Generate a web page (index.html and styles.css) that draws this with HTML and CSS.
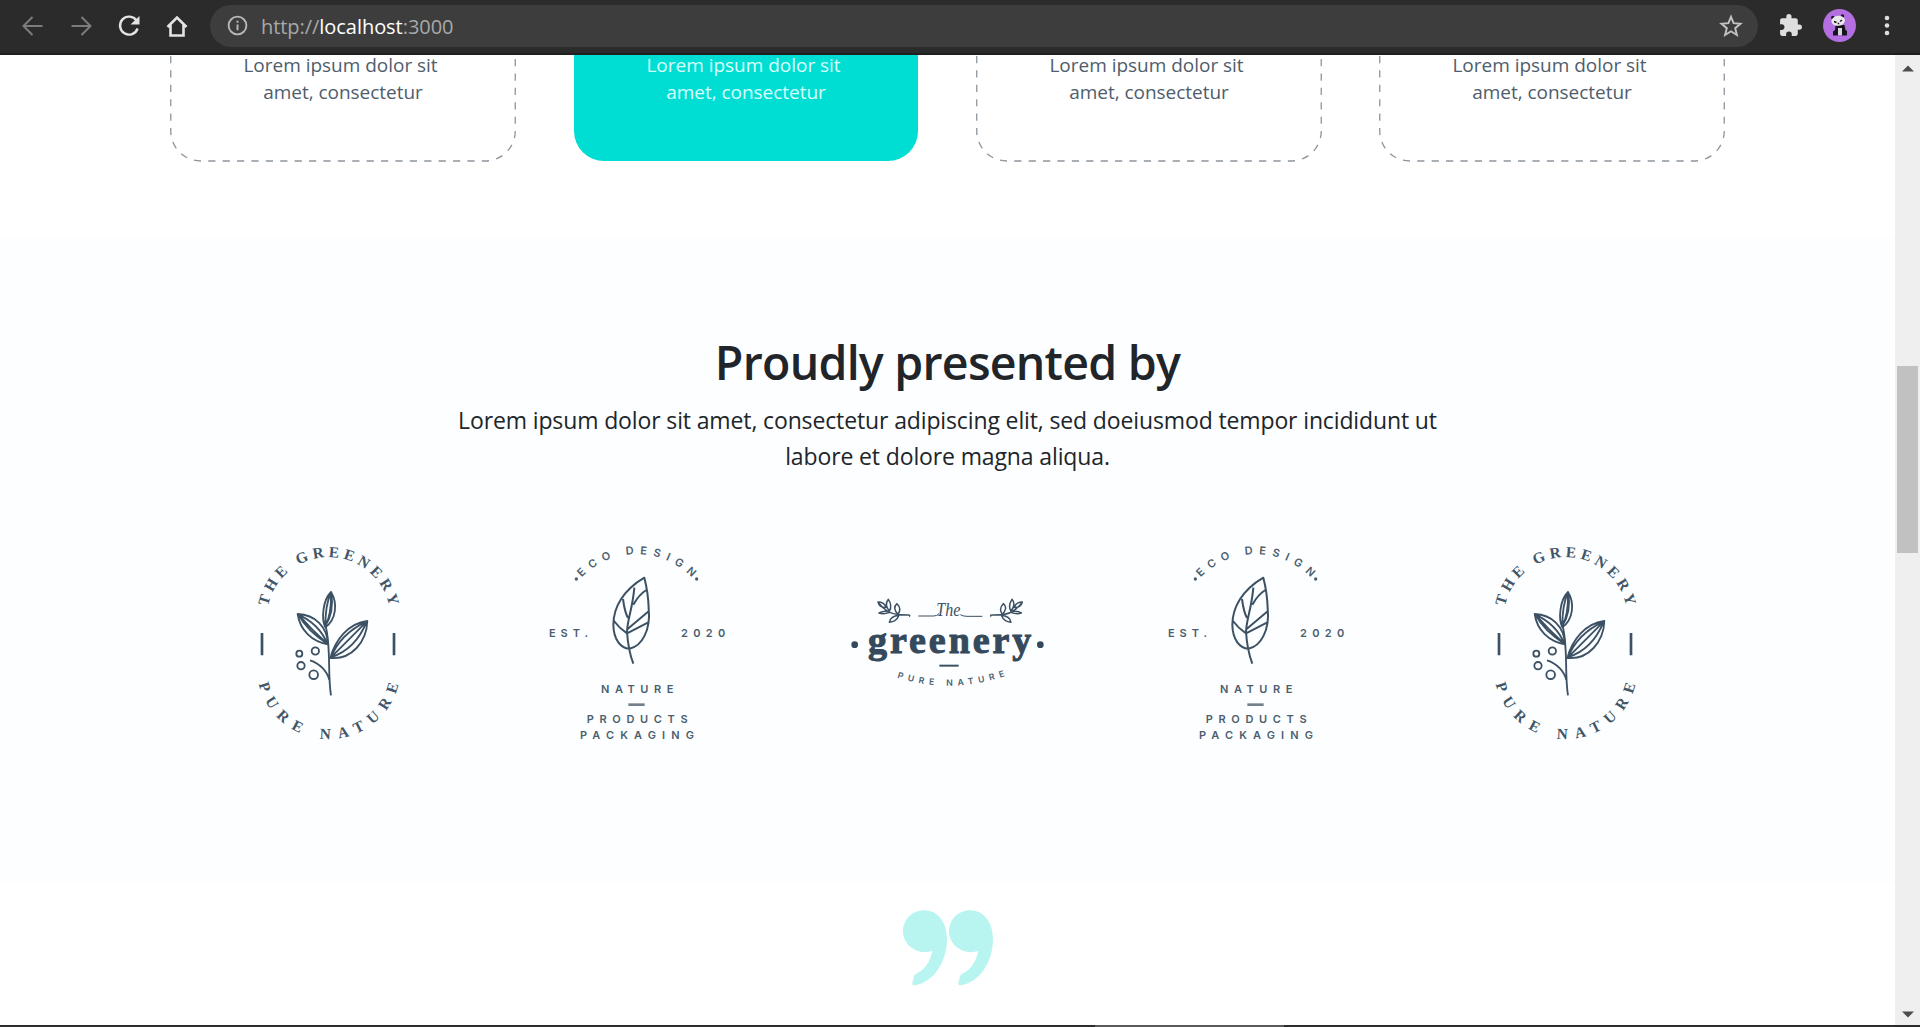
FILE: index.html
```html
<!DOCTYPE html>
<html lang="en">
<head>
<meta charset="utf-8">
<title>localhost:3000</title>
<link rel="stylesheet" href="styles.css">
</head>
<body>
<svg class="defs" width="0" height="0" aria-hidden="true">
  <defs>
    <symbol id="botanic" viewBox="-24 48 582 582">
      <path id="arc-top" d="M84 229A186 186 0 0 1 448 229" fill="none"/>
      <path id="arc-bottom" d="M56 462A216 216 0 0 0 476 462" fill="none"/>
      <g class="mark-serif">
        <text><textPath href="#arc-top" textLength="506">THE GREENERY</textPath></text>
        <text><textPath href="#arc-bottom" textLength="575">PURE NATURE</textPath></text>
      </g>
      <path class="ink" stroke-width="8" d="M66 309V376M462 309V376"/>
      <g class="ink" stroke-width="5.500">
        <path d="M273 496C262 430 274 350 256 284M268 450C262 425 240 400 210 391"/>
        <path d="M256 292C243 265 249 210 273 186C294 220 288 270 256 292ZM256 288C256 250 260 215 273 188C274 225 270 262 256 288M256 288Q283 245 274 190" />
        <path d="M264 343C215 335 180 300 173 252C225 254 262 290 264 343ZM262 341C225 318 195 290 175 254C215 272 245 300 262 341M262 341Q215 300 175 254"/>
        <path d="M271 384C285 330 325 280 382 273C380 335 335 390 271 384ZM273 382C290 340 325 300 380 275C360 325 325 365 273 382M273 382Q325 330 380 275"/>
        <circle cx="178" cy="371" r="9"/><circle cx="226" cy="363" r="11"/><circle cx="183" cy="407" r="11"/><circle cx="221" cy="434" r="13"/>
      </g>
    </symbol>
    <symbol id="leaf" viewBox="35 48 582 582">
      <path id="arc-eco" d="M157 142A231 231 0 0 1 489 144" fill="none"/>
      <g class="mark-sans">
        <text><textPath href="#arc-eco" textLength="368">ECO DESIGN</textPath></text>
        <text x="59" y="321" textLength="117">EST.</text>
        <text x="455" y="321" textLength="133">2020</text>
        <text x="215" y="488" textLength="217">NATURE</text>
        <text x="172" y="580" textLength="303">PRODUCTS</text>
        <text x="152" y="627" textLength="342">PACKAGING</text>
        <circle cx="141" cy="147" r="5"/><circle cx="502" cy="147" r="5"/>
      </g>
      <path class="ink soft" stroke-width="8" d="M297 524H346"/>
      <path class="ink" stroke-width="6" d="M345 143C282 180 252 232 252 285C253 330 275 355 300 356C337 350 365 300 358 235C357 200 352 170 345 143ZM312 401C302 375 296 350 293 306C294 268 310 235 315 173M281 207C284 230 288 250 296 264M351 180C335 190 322 206 312 224M254 273Q270 295 293 310L357 277M294 298L358 244"/>
    </symbol>
    <symbol id="greenery" viewBox="34 -102 582 582">
      <path id="arc-pure" d="M172 293Q335 345 505 285" fill="none"/>
      <text class="mark-script" x="290" y="109" textLength="72" lengthAdjust="spacingAndGlyphs">The</text>
      <text class="mark-display" x="85" y="218" textLength="490">greenery</text>
      <text class="mark-small"><textPath href="#arc-pure" textLength="330">PURE NATURE</textPath></text>
      <circle cx="45" cy="194" r="10" fill="#34495b"/><circle cx="602" cy="194" r="10" fill="#34495b"/>
      <path class="ink" stroke-width="6" d="M299 257H357"/>
      <path class="ink" stroke-width="3" d="M236 108H282Q292 108 298 101M362 104Q370 109 382 109H428"/>
      <g id="sprig" class="ink" stroke-width="4.500">
        <path d="M114 65Q142 104 180 104T208 109M115 66Q120 84 139 82Q134 66 115 66ZM146 58Q133 74 149 93Q159 77 146 58ZM172 71Q157 84 175 103Q187 86 172 71ZM118 99Q132 104 150 97Q136 90 118 99ZM149 127Q153 108 178 106Q170 126 149 127Z"/>
      </g>
      <use href="#sprig" transform="matrix(-1 0 0 1 663 0)"/>
    </symbol>
  </defs>
</svg>
<div class="browser">
  <header class="toolbar">
    <svg class="nav dim" viewBox="0 0 24 24"><path d="M21.500 12H3M11.500 3L2.500 12L11.500 21"/></svg>
    <svg class="nav dim" viewBox="0 0 24 24"><path d="M2.500 12H21M12.500 3L21.500 12L12.500 21"/></svg>
    <svg class="nav" viewBox="0 0 24 24"><path stroke-width="2.400" d="M19.500 6.500A9 9 0 1 0 20.600 14.500"/><path class="fill" d="M22.500 2V10.500H13.500Z"/></svg>
    <svg class="nav" viewBox="0 0 24 24"><path stroke-width="2.600" d="M2.500 13L12 3.500L21.500 13M5.500 11V21.500H18.500V11"/></svg>
    <div class="address">
      <svg class="info" viewBox="0 0 22 22"><circle cx="11" cy="11" r="9.300"/><path d="M11 10V16M11 6V8"/></svg>
      <span class="url">http://<b>localhost</b>:3000</span>
      <svg class="star" viewBox="0 0 24 24"><path d="M12 2.800L14.600 9.200L21.500 9.700L16.200 14.200L17.900 21L12 17.300L6.100 21L7.800 14.200L2.500 9.700L9.400 9.200Z"/></svg>
    </div>
    <svg class="puzzle" viewBox="0 0 24 24"><path d="M20.500 11H19V7c0-1.100-.9-2-2-2h-4V3.500a2.500 2.500 0 0 0-5 0V5H4c-1.100 0-2 .9-2 2v3.800h1.500a2.700 2.700 0 0 1 0 5.400H2V20c0 1.100.9 2 2 2h3.800v-1.500a2.700 2.700 0 0 1 5.400 0V22H17c1.100 0 2-.9 2-2v-4h1.500a2.500 2.500 0 0 0 0-5Z"/></svg>
    <svg class="avatar" viewBox="0 0 33 33">
      <circle cx="16.500" cy="16.500" r="16.500" fill="#b36ee0"/>
      <path fill="#17151c" d="M12.500 16h9l1 5 1.500 1v4.500h-5v-6h-4v6h-5v-4l2-1.500Z"/>
      <circle cx="9.800" cy="8.500" r="1.700" fill="#17151c"/><circle cx="19.500" cy="7" r="1.700" fill="#17151c"/>
      <path fill="#d9d5dd" d="M15 19h4v7h-4Z"/>
      <ellipse cx="15.200" cy="11.800" rx="6.800" ry="5" fill="#e9e9eb" transform="rotate(-8 15.200 11.800)"/>
      <path stroke="#17151c" stroke-width="1.400" d="M11 12.500l2.500 1M19 11l-2 1.500M14.700 14.500h1.500"/>
    </svg>
    <svg class="dots" viewBox="0 0 6 24"><circle cx="3" cy="4" r="2.300"/><circle cx="3" cy="11.500" r="2.300"/><circle cx="3" cy="19" r="2.300"/></svg>
  </header>
  <div class="viewport">
    <main class="page">
      <section class="cards">
        <article class="card"><p>Lorem ipsum dolor sit&nbsp;<br>amet, consectetur</p><svg class="outline"><rect x=".75" y="-40" width="344.500" height="146" rx="30"/></svg></article>
        <article class="card active"><p>Lorem ipsum dolor sit&nbsp;<br>amet, consectetur</p></article>
        <article class="card"><p>Lorem ipsum dolor sit&nbsp;<br>amet, consectetur</p><svg class="outline"><rect x=".75" y="-40" width="344.500" height="146" rx="30"/></svg></article>
        <article class="card"><p>Lorem ipsum dolor sit&nbsp;<br>amet, consectetur</p><svg class="outline"><rect x=".75" y="-40" width="344.500" height="146" rx="30"/></svg></article>
      </section>
      <section class="partners">
        <h2>Proudly presented by</h2>
        <p class="lead">Lorem ipsum dolor sit amet, consectetur adipiscing elit, sed doeiusmod tempor incididunt ut<br>labore et dolore magna aliqua.</p>
        <div class="logos">
          <svg><use href="#botanic"/></svg>
          <svg><use href="#leaf"/></svg>
          <svg><use href="#greenery"/></svg>
          <svg><use href="#leaf"/></svg>
          <svg><use href="#botanic"/></svg>
        </div>
      </section>
      <section class="quote">
        <svg viewBox="70 119 270 228"><path id="comma" d="M133 120C174 120 202 155 202 207C202 275 160 338 106 345Q97 346 98 338L103 318Q105 311 113 308C135 298 151 275 158 242C115 256 70 226 70 183C70 148 98 120 133 120Z"/><use href="#comma" x="138"/></svg>
      </section>
    </main>
    <aside class="scrollbar">
      <svg viewBox="0 0 12 7"><path d="M0 6.500L6 .5L12 6.500Z"/></svg>
      <div class="thumb"></div>
      <svg class="down" viewBox="0 0 12 7"><path d="M0 .5L6 6.500L12 .5Z"/></svg>
    </aside>
  </div>
  <footer class="edge"><span></span></footer>
</div>
</body>
</html>
```
FILE: styles.css
```css
* { box-sizing: border-box; }
body { margin: 0; font-family: "Open Sans", "Noto Sans", sans-serif; }
.defs { position: absolute; }
.browser { width: 1920px; height: 1027px; display: flex; flex-direction: column; overflow: hidden; background: #fff; }

.toolbar { height: 55px; flex: none; display: flex; align-items: center; padding: 0 30px 2px 21px; background: #2b2b2b; border-bottom: 2px solid #1f1f1f; }
.toolbar svg { flex: none; }
.nav { width: 24px; height: 24px; margin-right: 24px; fill: none; stroke: #e4e4e4; stroke-width: 2; }
.nav.dim { stroke: #7c7c7c; }
.nav .fill { fill: #e4e4e4; stroke: none; }
.address { width: 1548px; height: 42px; margin-left: -3px; border-radius: 21px; background: #3d3d3d; display: flex; align-items: center; padding: 0 15px 0 17px; }
.info { width: 21px; height: 21px; fill: none; stroke: #b8b8b8; stroke-width: 2; }
.url { margin-left: 13px; padding-top: 2px; font-size: 20px; line-height: 28px; letter-spacing: -0.050px; color: #a9a9a9; flex: 1; }
.url b { font-weight: 400; color: #fff; }
.star { width: 24px; height: 24px; fill: none; stroke: #c4c4c4; stroke-width: 1.900; }
.puzzle { width: 25px; height: 25px; margin: 0 0 1px 20px; fill: #dedede; }
.avatar { width: 33px; height: 33px; margin-left: 20px; }
.dots { width: 6px; height: 24px; margin-left: auto; fill: #dedede; }

.viewport { flex: 1; min-height: 0; display: flex; }
.page { width: 1895px; flex: none; }
.cards { height: 181px; display: grid; grid-template-columns: repeat(4, 346px); column-gap: 57px; padding-left: 170px; align-items: start; }
.card { height: 107px; position: relative; text-align: center; color: #4f5d6c; }
.card p { margin: -3px 0 0; font-size: 19px; line-height: 27px; letter-spacing: -0.020px; }
.card::before { content: ""; display: table; }
.card.active { width: 344px; height: 106px; margin-left: 1px; background: #00ded4; border-radius: 0 0 30px 30px; color: #d8fffc; }
.outline { position: absolute; inset: 0; width: 346px; height: 107px; fill: none; stroke: #8d959d; stroke-width: 1.300; stroke-dasharray: 7.200 7.200; }

.partners { height: 648px; padding-top: 97px; background: #fcfeff; text-align: center; color: #212529; }
h2 { margin: 0; font-size: 46.500px; line-height: 58px; font-weight: 600; letter-spacing: -0.750px; }
.lead { margin: 11px 0 0; font-size: 23px; line-height: 36px; letter-spacing: -0.130px; }
.logos { display: grid; grid-template-columns: repeat(5, 309.250px); justify-content: center; justify-items: center; margin-top: 72px; }
.logos svg { width: 194px; height: 194px; overflow: visible; }
symbol { overflow: visible; }
.ink { fill: none; stroke: #3c5163; stroke-linecap: butt; stroke-linejoin: round; }
.soft { stroke: #74818c; }
.mark-serif { font: 700 46px "Liberation Serif", serif; fill: #415567; }
.mark-sans { font: 600 33px Inter, sans-serif; fill: #4c5e6e; }
.mark-display { font: 700 114px "Liberation Serif", serif; fill: #34495b; stroke: #34495b; stroke-width: 3; }
.mark-script { font: italic 58px "Liberation Serif", serif; fill: #3c5163; }
.mark-small { font: 600 26px Inter, sans-serif; fill: #4c5e6e; }

.quote { display: flex; justify-content: center; padding-top: 26px; }
.quote svg { width: 90px; height: 76px; fill: #b9f5f0; }

.scrollbar { width: 25px; background: #efefef; display: flex; flex-direction: column; align-items: center; padding: 10px 0 7px; }
.scrollbar svg { width: 12px; height: 7px; fill: #4d4d4d; }
.thumb { width: 21px; height: 187px; margin-top: 294px; background: #c1c1c1; }
.down { margin-top: auto; }
.edge { height: 2px; flex: none; background: #2c2c2c; padding-left: 1095px; }
.edge span { display: block; width: 189px; height: 2px; background: #5a5a5a; }
```
